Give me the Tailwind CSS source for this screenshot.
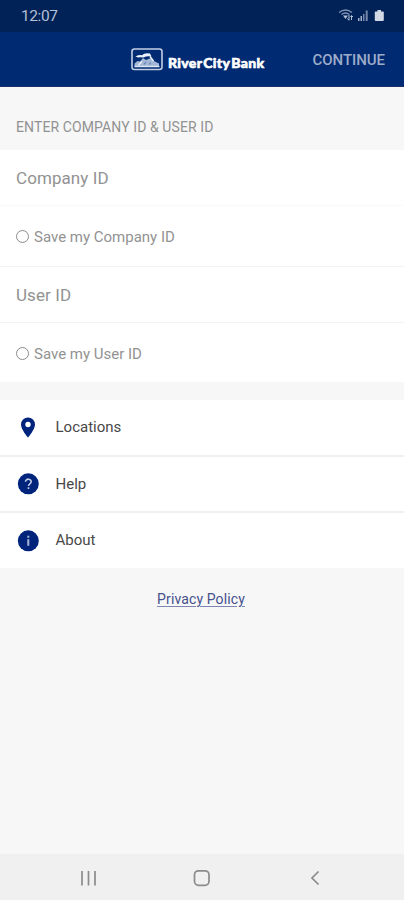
<!DOCTYPE html>
<html lang="en">
<head>
<meta charset="utf-8">
<meta name="viewport" content="width=device-width, initial-scale=1">
<title>River City Bank</title>
<script src="https://cdn.jsdelivr.net/npm/@tailwindcss/browser@4"></script>
</head>
<body class="bg-[#f7f7f7]">
<div class="flex h-[900px] w-[404px] flex-col overflow-hidden bg-[#f7f7f7] font-['Roboto',sans-serif] text-[#929292]">
  <div class="flex h-8 shrink-0 items-center justify-between bg-[#002257] pr-[18px] pl-[21px] text-[#b4c0d6]">
    <span class="text-[15.5px] leading-8 tracking-[-0.4px]">12:07</span>
    <svg class="h-4 w-12" viewBox="0 0 48 16" fill="none">
      <path d="M1 4.500Q7.500-.5 14 4.500M3.500 6.500Q7.500 3.500 11.500 6.500" stroke="#8293b3" stroke-width="1.300"/>
      <path d="M5 7.500h5L7.500 11z" fill="#b4c0d6"/>
      <path d="M11 7v5M9.500 10.500 11 12.500M13.500 12V8M12.500 9l1-1.500 1.500 1.500" stroke="#b4c0d6"/>
      <path d="M20 10h1.500v3H20zM22.500 8H24v5h-1.500z" fill="#a4b1ca"/>
      <path d="M25 6h1.500v7H25zM27.700 2.500h2V13h-2z" fill="#7687aa"/>
      <path d="M39.500 2h3.500v1.500h2q.8 0 .8.800V12q0 1-1 1h-7q-1 0-1-1V4.300q0-.8.800-.8h1.900z" fill="#d3dae6"/>
    </svg>
  </div>
  <header class="grid h-[54.500px] shrink-0 grid-cols-[130.500px_135px_1fr] items-center border-b border-[#1b2f72] bg-[#002a72]">
    <span></span>
    <div class="flex items-center gap-[5.500px]">
      <svg class="mt-[2px] h-[23px] w-8 shrink-0" viewBox="0 0 32 23" fill="none">
        <rect x="1" y="1" width="30" height="20.500" rx="2.500" stroke="#c3cfe4" stroke-width="1.600"/>
        <path d="M3.500 15.500 6.500 13 9 13.500 12 10 15 12 20 10 23 13 28 15.500V18.500H3.500z" fill="#a3b6d5"/>
        <path d="M4.500 8.500Q8 6.500 11 7.200Q13 4.800 19 5.500L20.500 8.500Q16 7.500 12.500 9.500Q9 8.800 7 9.500z" fill="#eaf1fa"/>
        <path d="M19 8.500 22.500 13M7.500 17 11 13.500" stroke="#eaf1fa" stroke-width="1.500"/>
        <path d="M13 16.500 15 14M18.500 16.500 19.500 14.500" stroke="#5f7db0" stroke-width="1.200"/>
        <path d="M3.500 18.500h25" stroke="#dce5f2" stroke-width="1.500"/>
      </svg>
      <span class="mt-[8px] text-[14px] leading-4 font-black tracking-[0.330px] whitespace-nowrap text-white [-webkit-text-stroke:0.6px_white] font-['Lato',sans-serif]">River<span class="ml-[1px]">City</span><span class="ml-[1px]">Bank</span></span>
    </div>
    <button class="mt-[2px] justify-self-end pr-[19px] text-[15px] leading-5 font-medium tracking-[-0.050px] text-[#9dacc9]">CONTINUE</button>
  </header>
  <main class="flex flex-1 flex-col">
    <h1 class="h-[63.500px] pt-[30px] pl-4 text-[14px] leading-5 tracking-[0.100px]">ENTER COMPANY ID &amp; USER ID</h1>
    <section class="flex flex-col bg-white">
      <div class="flex h-14 items-center border-b border-[#f9f9f9] pt-[2px] pl-4 text-[17px] tracking-[0.080px]">Company ID</div>
      <label class="flex h-[61px] items-center gap-[5.500px] border-b border-[#f3f3f3] pt-[3px] pl-[15.500px] text-[15px]"><span class="mb-[3px] size-[13px] rounded-full border-[1.500px] border-[#8b8b8b]"></span><span>Save my Company ID</span></label>
      <div class="flex h-14 items-center border-b border-[#f3f3f3] pt-[2px] pl-4 text-[17px] tracking-[0.080px]">User ID</div>
      <label class="flex h-[59px] items-center gap-[5.500px] pt-[3px] pl-[15.500px] text-[15px]"><span class="mb-[2px] size-[13px] rounded-full border-[1.500px] border-[#8b8b8b]"></span><span>Save my User ID</span></label>
    </section>
    <nav class="mt-[18px] flex flex-col bg-white text-[15px] text-[#484848]">
      <a class="flex h-[57px] items-center gap-4 border-b-2 border-[#f0f0f0] pl-4"><svg class="size-6" viewBox="0 0 24 24"><path d="M12 1.500a7 7 0 0 0-7 7c0 5 7 13 7 13s7-8 7-13a7 7 0 0 0-7-7z" fill="#00247b"/><circle cx="12" cy="8.500" r="2.700" fill="#fff"/></svg><span class="-ml-[0.500px]">Locations</span></a>
      <a class="flex h-14 items-center gap-4 border-b-2 border-[#f0f0f0] pl-4"><svg class="size-6" viewBox="0 0 24 24" fill="none"><circle cx="12.300" cy="11.800" r="10.500" fill="#00247b"/><path d="M9.500 9.800c0-3.600 5.700-3.400 5.700 0 0 2-2.700 2.200-2.700 4.300M12.500 15.300v1.700" stroke="#c3cde4" stroke-width="1.600"/></svg><span class="-ml-[0.500px]">Help</span></a>
      <a class="flex h-[55px] items-center gap-4 pl-4"><svg class="size-6" viewBox="0 0 24 24" fill="none"><circle cx="12.300" cy="11.800" r="10.500" fill="#00247b"/><path d="M12.300 6.800v1.900M12.300 10.300v6.500" stroke="#a9b8d8" stroke-width="2"/></svg><span class="-ml-[0.500px]">About</span></a>
    </nav>
    <a class="mt-[21px] mr-[2px] self-center text-[14px] leading-5 tracking-[0.120px] text-[#46518c] underline decoration-[#7d86b3] underline-offset-2">Privacy Policy</a>
  </main>
  <footer class="flex h-[46px] shrink-0 items-center bg-[#f0f0f0]">
    <svg class="h-[46px] w-[404px]" viewBox="0 0 404 46" fill="none" stroke="#8b8b8b" stroke-width="1.700">
      <path d="M82 17v14.500M88.500 17v14.500M95 17v14.500"/>
      <rect x="194.500" y="16.800" width="14.500" height="14.500" rx="4"/>
      <path d="M318.500 17.500 312 24l6.500 6.500"/>
    </svg>
  </footer>
</div>
</body>
</html>
